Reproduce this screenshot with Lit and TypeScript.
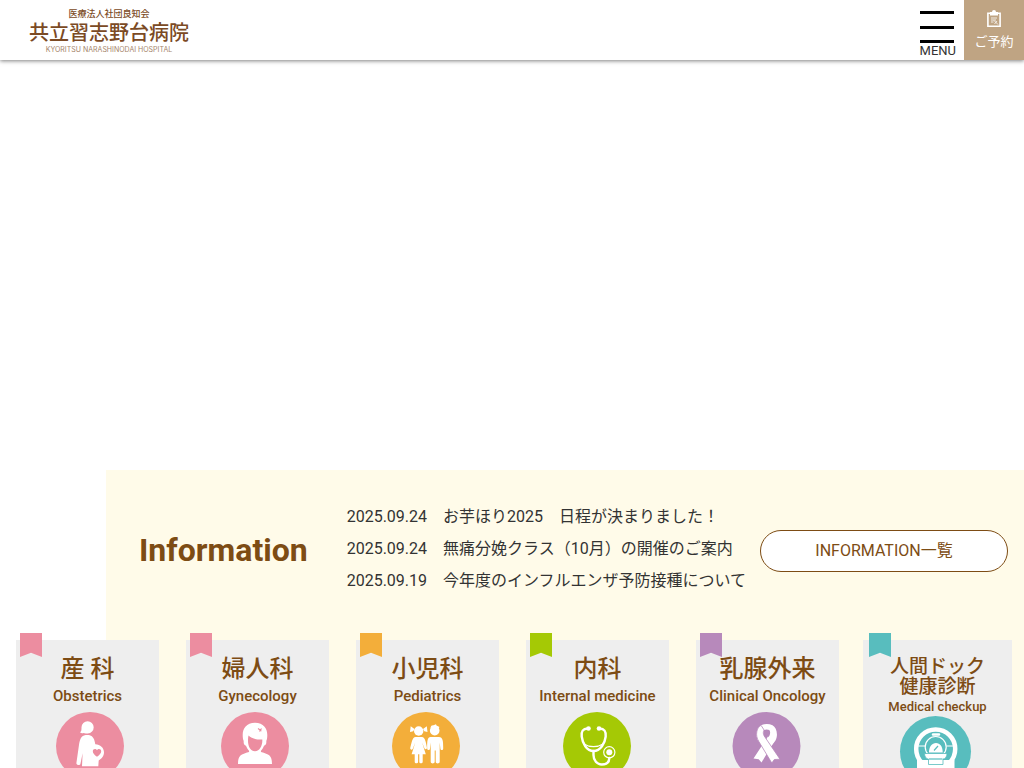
import { LitElement, html, svg, css } from "lit";
import { customElement, property } from "lit/decorators.js";
import { classMap } from "lit/directives/class-map.js";

interface News {
  date: string;
  title: string;
}

interface Department {
  title: string;
  english: string;
  tone: string;
  compact?: boolean;
  icon: unknown;
}

const NEWS: News[] = [
  { date: "2025.09.24", title: "お芋ほり2025　日程が決まりました！" },
  { date: "2025.09.24", title: "無痛分娩クラス（10月）の開催のご案内" },
  { date: "2025.09.19", title: "今年度のインフルエンザ予防接種について" },
];

const maternity = svg`
  <circle class="disc" cx="74" cy="34" r="34"></circle>
  <path class="fill" d="M65.5 15.2a6.1 6.1 0 1 1 6.3 6.2c-1.600 0-3 .2-4.200-.3-1.200.5-2.700.3-3.600-.8 1.500-.7 1.500-2.700 1.500-5.100z"></path>
  <path class="fill" d="M68 23.500c5-1.300 9.300.2 10.500 5.200l.8 3.500c5 .3 8.700 3.500 8.700 8.100 0 4-2.600 6.700-5.300 8.200l-.4 5.800H66l.6-13-2.200 10.600c-.5 1.900-4.300 1.200-4-1l2.500-17.400c.7-5 1.800-9 5.100-10z"></path>
  <path class="disc" d="M81 44.800c-2.500-1.900-4.200-3.400-4.200-5.500 0-2.700 3.200-3.200 4.200-1 1-2.200 4.200-1.700 4.200 1 0 2.100-1.700 3.600-4.200 5.500z"></path>`;

const woman = svg`
  <circle class="disc" cx="69" cy="34" r="34"></circle>
  <path class="fill" d="M52 52c0-9 3-9.500 11-12l.5-3h11l.5 3c8 2.500 11 3 11 12z"></path>
  <path class="fill" d="M69 10.800c8.500 0 12.300 5.700 12.300 12.200 0 2.700-.3 4.500-1 6 .3 3-.6 4.500-2.300 4.700-1.500 4.300-4.700 7.600-9 7.600s-7.500-3.300-9-7.600c-1.700-.2-2.600-1.700-2.300-4.700-.7-1.500-1-3.300-1-6 0-6.500 3.800-12.200 12.300-12.200z"></path>
  <path class="disc" d="M62.500 23.500c3 3.300 8.500 4.200 13.800 4 .4 5.500-2.300 11.700-7.300 11.700-5.300 0-8.300-7-6.500-15.700z"></path>
  <path class="stroke" d="M72 16.500l3.500 2.500M75.500 16.500l-2 3"></path>`;

const children = svg`
  <circle class="disc" cx="70" cy="34" r="34"></circle>
  <circle class="fill" cx="62.700" cy="19" r="4.700"></circle>
  <path class="fill" d="M58.500 17l-3.800-2.800-.7 5.800 3.200-.7zM67 17l3.800-2.800.7 5.800-3.200-.7z"></path>
  <path class="fill" d="M59.500 25h6.400c3.300 0 4 5.500 5 10.500.4 2-2 2.300-2.500.7l-2.300-5.700 3.700 11.700h-3.100v7.600c0 2.100-3.400 2.100-3.400 0v-7.600h-1.200v7.600c0 2.100-3.400 2.100-3.400 0v-7.600h-3.100l3.700-11.700-2.500 6.300c-.8 1.700-3.100.8-2.500-1.300 1.300-4.500 2-10.500 5.200-10.500z"></path>
  <circle class="fill" cx="78.700" cy="18.700" r="4.800"></circle>
  <path class="fill" d="M74.500 15.500q.5-2.500 3-2.200l2.500-1 .5 1.200 3 1.500-1.500 2z"></path>
  <path class="fill" d="M74.500 25h8.400c4 0 4.300 4 4.300 11.500 0 2-2.700 2-2.800 0l-.7-6v19.300c0 2.200-4 2.200-4 0V38.500h-1v11.300c0 2.200-4 2.200-4 0V30.500l-.7 6c-.1 2-2.800 2-2.800 0-.2-7.500.3-11.500 3.300-11.500z"></path>`;

const stethoscope = svg`
  <circle class="disc" cx="71" cy="34" r="34"></circle>
  <path class="line" d="M61.500 16.500c-4.500 0-6.500 3-5.800 8 .8 6.500 4.800 14.500 11.800 14.500s11.500-8 12.200-14.500c.5-5-1.500-8-6-8"></path>
  <path class="line thin" d="M58 32c5.500 3.500 13.500 3.500 19 0"></path>
  <path class="line" d="M67.500 39v4c0 5.500 3.500 9.500 8.300 9.500 4.700 0 7.500-2.300 7.500-6.500"></path>
  <circle class="fill" cx="62.500" cy="16.500" r="2.300"></circle>
  <circle class="fill" cx="73" cy="16.500" r="2.300"></circle>
  <circle class="line thin" cx="83.300" cy="40.300" r="5.600"></circle>
  <circle class="fill" cx="83.300" cy="40.300" r="3"></circle>`;

const ribbon = svg`
  <circle class="disc" cx="70.500" cy="34" r="34"></circle>
  <path class="fill" d="M57.500 46.500L72 24.500l6 5L65.500 50.500l-2.800-3.200z"></path>
  <path class="fill" d="M62 28.500c-3-6-1-13 3-15.200 3.500-1.700 8-1.700 11.500 0 4 2.200 6 9.200 3 15.200l-4.500 6-5-5.500 3.500-5.500c1-2 .8-4-.2-5.500-1.500-.8-3.800-.8-5.200 0-1 1.500-1.200 3.500-.2 5.500z"></path>
  <path class="edge" d="M60.800 24.500c.5 2 1 3.500 2 5L75.800 51l2.500-3.500 5.700-.3-16-23.500c-1-1.800-.9-4.200.1-5.700l-3.100-4.700c-3.400 2-5 6.500-4.200 11.200z"></path>`;

const scanner = svg`
  <circle class="disc" cx="72.500" cy="35.500" r="35.500"></circle>
  <path class="fill" d="M54 60V44h37.500v16z"></path>
  <circle class="ring" cx="72.700" cy="33" r="19.500"></circle>
  <path class="line thin" d="M55 30h7M84 30h7"></path>
  <path class="line" d="M70 18.500h6"></path>
  <circle class="line thin" cx="72.700" cy="31" r="10.500"></circle>
  <path class="fill" d="M66 36.500c0-6 3-9.500 7-9.500s6.700 3.500 6.700 9.500z"></path>
  <path class="stroke" d="M71 34.500l4-4.500"></path>
  <path class="base" d="M61.500 37.500h22.500c0 3.500-2 5.500-4 5.500v5.500H65.500V43c-2 0-4-2-4-5.500z"></path>
  <path class="stroke" d="M66 43h13.500"></path>`;

const DEPARTMENTS: Department[] = [
  { title: "産 科", english: "Obstetrics", tone: "pink", icon: maternity },
  { title: "婦人科", english: "Gynecology", tone: "pink", icon: woman },
  { title: "小児科", english: "Pediatrics", tone: "orange", icon: children },
  { title: "内科", english: "Internal medicine", tone: "green", icon: stethoscope },
  { title: "乳腺外来", english: "Clinical Oncology", tone: "purple", icon: ribbon },
  {
    title: "人間ドック\n健康診断",
    english: "Medical checkup",
    tone: "teal",
    compact: true,
    icon: scanner,
  },
];

@customElement("site-header")
export class SiteHeader extends LitElement {
  static styles = css`
    :host {
      display: block;
      position: relative;
      z-index: 2;
    }
    .bar {
      display: flex;
      align-items: stretch;
      height: 60px;
      background: #fff;
      box-shadow: 0 1px 4px rgba(0, 0, 0, 0.5);
    }
    .logo {
      display: flex;
      flex-direction: column;
      align-items: center;
      margin: 8px auto 0 29px;
      color: #7b4a24;
      text-decoration: none;
      white-space: nowrap;
    }
    .group {
      font-size: 9px;
      line-height: 12px;
      font-weight: 500;
    }
    .name {
      font-size: 20px;
      line-height: 26px;
      font-weight: 500;
    }
    .roman {
      font-family: Inter, sans-serif;
      font-size: 7px;
      line-height: 8px;
      color: #a58469;
    }
    .menu {
      display: flex;
      flex-direction: column;
      align-items: flex-start;
      margin: 0 8px 0 0;
      padding: 11px 0 0;
      border: 0;
      background: none;
      color: #333;
      font: inherit;
      font-size: 13px;
      line-height: 16px;
      cursor: pointer;
    }
    .lines {
      display: flex;
      flex-direction: column;
      justify-content: space-between;
      width: 34px;
      height: 32px;
    }
    .line {
      height: 3px;
      background: #000;
    }
    .reserve {
      display: flex;
      flex-direction: column;
      align-items: center;
      gap: 4px;
      width: 60px;
      padding-top: 10px;
      box-sizing: border-box;
      background: #bfa483;
      color: #fff;
      font-size: 13px;
      line-height: 20px;
      text-decoration: none;
    }
    .clip {
      display: block;
      width: 14px;
      height: 18px;
    }
  `;

  render() {
    return html`
      <header class="bar">
        <a class="logo" href="#">
          <span class="group">医療法人社団良知会</span>
          <span class="name">共立習志野台病院</span>
          <span class="roman">KYORITSU NARASHINODAI HOSPITAL</span>
        </a>
        <button class="menu" type="button">
          <span class="lines">
            <span class="line"></span><span class="line"></span><span class="line"></span>
          </span>
          MENU
        </button>
        <a class="reserve" href="#">
          <svg class="clip" viewBox="0 0 14 18" aria-hidden="true">
            <path
              fill="none"
              stroke="#fff"
              stroke-width="1.600"
              d="M.9 3.300h12.200v13H.9z"
            ></path>
            <path fill="#fff" d="M3 5.500V2h2a2 2 0 0 1 4 0h2v3.500z"></path>
            <path
              fill="none"
              stroke="#fff"
              stroke-width=".8"
              d="M4 8h6M4 10h5M4 12h2.500M7 10.500l4 4M7.500 14l2.500-3"
            ></path>
          </svg>
          <span>ご予約</span>
        </a>
      </header>
    `;
  }
}

@customElement("department-card")
export class DepartmentCard extends LitElement {
  @property({ attribute: false }) department!: Department;

  static styles = css`
    :host {
      display: block;
    }
    .card {
      --tone: #ec8da0;
      position: relative;
      display: block;
      min-height: 168px;
      padding-top: 13px;
      box-sizing: border-box;
      background: #eeeeee;
      color: #7d4c14;
      text-align: center;
      text-decoration: none;
      white-space: nowrap;
    }
    .orange {
      --tone: #f3ae3a;
    }
    .green {
      --tone: #a5c905;
    }
    .purple {
      --tone: #b789bb;
    }
    .teal {
      --tone: #58bdbe;
    }
    .flag {
      position: absolute;
      top: -7px;
      left: 4px;
      width: 22px;
      height: 24px;
      background: var(--tone);
      clip-path: polygon(0 0, 100% 0, 100% 100%, 50% 82%, 0 100%);
    }
    .title,
    .english {
      display: block;
      font-weight: 500;
    }
    .title {
      font-size: 24px;
      line-height: 32px;
      white-space: pre-line;
    }
    .english {
      margin-bottom: 4px;
      font-size: 15px;
      line-height: 23px;
    }
    .icon {
      display: block;
      width: 143px;
      height: 68px;
      margin: 0 auto;
    }
    .compact {
      padding-top: 17px;
    }
    .compact .flag {
      left: 6px;
    }
    .compact .title {
      font-size: 19px;
      line-height: 20px;
    }
    .compact .english {
      margin-bottom: 0;
      font-size: 13px;
      line-height: 19px;
    }
    .compact .icon {
      width: 149px;
      height: 71px;
    }
    .disc {
      fill: var(--tone);
    }
    .fill {
      fill: #fff;
    }
    .line {
      fill: none;
      stroke: #fff;
      stroke-width: 2.4;
      stroke-linecap: round;
    }
    .thin {
      stroke-width: 1.2;
    }
    .ring {
      fill: none;
      stroke: #fff;
      stroke-width: 4.5;
    }
    .edge,
    .base {
      fill: #fff;
      stroke: var(--tone);
      stroke-width: 0.8;
    }
    .stroke {
      fill: none;
      stroke: var(--tone);
      stroke-width: 1.2;
    }
  `;

  render() {
    const d = this.department;
    const classes = { card: true, [d.tone]: true, compact: !!d.compact };
    return html`
      <a class=${classMap(classes)} href="#">
        <span class="flag"></span>
        <span class="title">${d.title}</span>
        <span class="english">${d.english}</span>
        <svg class="icon" viewBox=${d.compact ? "0 0 149 71" : "0 0 143 68"} aria-hidden="true">
          ${d.icon}
        </svg>
      </a>
    `;
  }
}

@customElement("app-root")
export class AppRoot extends LitElement {
  static styles = css`
    :host {
      display: block;
      background: #fff;
      color: #333;
      font-family: Roboto, "Noto Sans CJK JP", sans-serif;
      font-size: 16px;
    }
    .hero {
      height: 410px;
    }
    .information {
      display: flex;
      align-items: center;
      margin-left: 106px;
      padding: 31px 16px 211px 33px;
      background: #fffbe9;
    }
    .heading {
      margin: 2px 39px 0 0;
      color: #7d4c14;
      font-size: 32px;
      line-height: 40px;
      font-weight: 700;
    }
    .news {
      flex: 1;
      margin: 0;
      padding: 0;
      list-style: none;
      white-space: nowrap;
    }
    .entry {
      display: flex;
      gap: 16px;
      color: inherit;
      line-height: 32px;
      text-decoration: none;
    }
    .all {
      width: 248px;
      margin-top: 4px;
      box-sizing: border-box;
      border: 1px solid #7d4c14;
      border-radius: 21px;
      background: #fff;
      color: #7d4c14;
      line-height: 40px;
      text-align: center;
      text-decoration: none;
    }
    .departments {
      position: relative;
      display: grid;
      grid-template-columns: repeat(6, 1fr);
      gap: 27px;
      margin-top: -168px;
      padding: 0 15px 0 16px;
    }
    .wide {
      margin: 0 -3px;
    }
  `;

  render() {
    return html`
      <site-header></site-header>
      <main>
        <div class="hero"></div>
        <section class="information">
          <h2 class="heading">Information</h2>
          <ul class="news">
            ${NEWS.map(
              (n) => html`
                <li>
                  <a class="entry" href="#"><time>${n.date}</time><span>${n.title}</span></a>
                </li>
              `
            )}
          </ul>
          <a class="all" href="#">INFORMATION一覧</a>
        </section>
        <nav class="departments">
          ${DEPARTMENTS.map(
            (d) => html`
              <department-card
                class=${classMap({ wide: !!d.compact })}
                .department=${d}
              ></department-card>
            `
          )}
        </nav>
      </main>
    `;
  }
}
